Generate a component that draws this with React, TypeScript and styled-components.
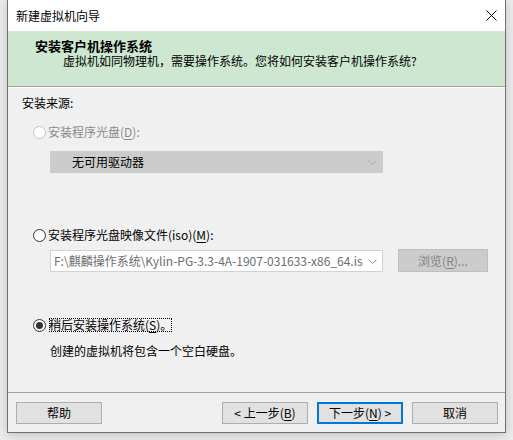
import styled, { createGlobalStyle } from 'styled-components';

const GlobalStyle = createGlobalStyle`
  html, body {
    margin: 0;
    padding: 0;
    background: #ececec;
  }
  body {
    font-family: "Noto Sans CJK SC", "Noto Sans", sans-serif;
    font-size: 12px;
    color: #000;
  }
`;

// --- window frame ---
const Screen = styled.div`
  width: 513px;
  height: 440px;
  overflow: hidden;
  display: flex;
  align-items: flex-start;
  padding-left: 7px;
  box-sizing: border-box;
`;

const Window = styled.div`
  width: 499px;
  height: 433px;
  box-sizing: border-box;
  border: 1px solid #707070;
  border-top: none;
  background: #f0f0f0;
  display: flex;
  flex-direction: column;
  box-shadow: 0 2px 10px rgba(0, 0, 0, 0.18);
`;

const TitleBar = styled.div`
  height: 31px;
  background: #fff;
  display: flex;
  align-items: center;
  justify-content: space-between;
  padding-left: 8px;
  line-height: 16px;
`;

const CloseButton = styled.div`
  width: 46px;
  height: 31px;
  display: flex;
  align-items: center;
  justify-content: center;
  margin-right: -9px;
`;

// --- green header ---
const Header = styled.div`
  height: 56px;
  background: #cde7d1;
  border-bottom: 1px solid #a0a0a0;
  padding: 7px 0 0 27px;
  box-sizing: border-box;
`;

const HeaderTitle = styled.div`
  font-weight: bold;
  font-size: 13px;
  line-height: 16px;
`;

const HeaderSub = styled.div`
  line-height: 14px;
  margin-left: 28px;
`;

// --- body ---
const Body = styled.div`
  flex: 1;
  border-top: 1px solid #fff;
  padding: 7px 0 0 14px;
  display: flex;
  flex-direction: column;
`;

const Label = styled.div<{ $top?: number; $indent?: number }>`
  line-height: 16px;
  margin-top: ${({ $top }) => $top ?? 0}px;
  margin-left: ${({ $indent }) => $indent ?? 0}px;
`;

const RadioRow = styled.div<{ $top: number; $disabled?: boolean }>`
  display: flex;
  align-items: center;
  gap: 2px;
  margin: ${({ $top }) => $top}px 0 0 11px;
  line-height: 16px;
  color: ${({ $disabled }) => ($disabled ? '#8a8a8a' : '#000')};
`;

const RadioCircle = styled.span<{ $disabled?: boolean; $checked?: boolean }>`
  width: 13px;
  height: 13px;
  box-sizing: border-box;
  border-radius: 50%;
  border: 1px solid ${({ $disabled }) => ($disabled ? '#c4c4c4' : '#333')};
  background: #fff;
  display: flex;
  align-items: center;
  justify-content: center;
  &::after {
    content: '';
    display: ${({ $checked }) => ($checked ? 'block' : 'none')};
    width: 7px;
    height: 7px;
    border-radius: 50%;
    background: #333;
  }
`;

const FocusText = styled.span`
  outline: 1px dotted #000;
  outline-offset: -2px;
  padding: 0 1px;
`;

const Key = styled.span`
  text-decoration: underline;
  text-underline-offset: 2px;
`;

const Field = styled.div<{ $disabled?: boolean }>`
  position: relative;
  width: 333px;
  height: 22px;
  box-sizing: border-box;
  border: 1px solid ${({ $disabled }) => ($disabled ? '#cccccc' : '#d2d2d2')};
  background: ${({ $disabled }) => ($disabled ? '#cccccc' : '#fff')};
  display: flex;
  align-items: center;
  line-height: 16px;
  overflow: hidden;
`;

const FieldText = styled.span<{ $muted?: boolean; $pad: number }>`
  box-sizing: border-box;
  padding-left: ${({ $pad }) => $pad}px;
  color: ${({ $muted }) => ($muted ? '#6d6d6d' : '#000')};
  white-space: nowrap;
  width: 312px;
  overflow: hidden;
  flex: none;
`;

const Chevron = styled.svg`
  position: absolute;
  right: 5px;
  top: 8px;
`;

const PathRow = styled.div<{ $top: number }>`
  display: flex;
  align-items: center;
  gap: 15px;
  margin: ${({ $top }) => $top}px 0 0 28px;
`;

const BrowseButton = styled.div`
  width: 90px;
  height: 23px;
  box-sizing: border-box;
  border: 1px solid #bfbfbf;
  background: #cccccc;
  color: #838383;
  display: flex;
  align-items: center;
  justify-content: center;
  line-height: 16px;
  margin-top: -1px;
`;

// --- footer ---
const Footer = styled.div`
  height: 40px;
  border-top: 1px solid #a0a0a0;
  display: flex;
  align-items: center;
  padding: 0 7px 0 8px;
  box-sizing: border-box;
`;

const NavGroup = styled.div`
  margin-left: auto;
  display: flex;
  gap: 9px;
`;

const Button = styled.div<{ $default?: boolean }>`
  width: 86px;
  height: 22px;
  box-sizing: border-box;
  border: ${({ $default }) => ($default ? '2px solid #0078d7' : '1px solid #adadad')};
  background: #e1e1e1;
  display: flex;
  align-items: center;
  justify-content: center;
  line-height: 16px;
`;

function DownChevron({ color }: { color: string }) {
  return (
    <Chevron width="9" height="5" viewBox="0 0 9 5">
      <path d="M0.5 0.5 L4.5 4.5 L8.5 0.5" fill="none" stroke={color} strokeWidth="1" />
    </Chevron>
  );
}

export default function App() {
  return (
    <Screen>
      <GlobalStyle />
      <Window>
        <TitleBar>
          <span>新建虚拟机向导</span>
          <CloseButton>
            <svg width="11" height="11" viewBox="0 0 11 11">
              <path d="M0.5 0.5 L10.5 10.5 M10.5 0.5 L0.5 10.5" stroke="#000" strokeWidth="1" />
            </svg>
          </CloseButton>
        </TitleBar>

        <Header>
          <HeaderTitle>安装客户机操作系统</HeaderTitle>
          <HeaderSub>虚拟机如同物理机，需要操作系统。您将如何安装客户机操作系统?</HeaderSub>
        </Header>

        <Body>
          <Label>安装来源:</Label>

          <RadioRow $top={13} $disabled>
            <RadioCircle $disabled />
            <span>
              安装程序光盘(<Key>D</Key>):
            </span>
          </RadioRow>
          <PathRow $top={11}>
            <Field $disabled>
              <FieldText $pad={21}>无可用驱动器</FieldText>
              <DownChevron color="#a6a6a6" />
            </Field>
          </PathRow>

          <RadioRow $top={54}>
            <RadioCircle />
            <span>
              安装程序光盘映像文件(iso)(<Key>M</Key>):
            </span>
          </RadioRow>
          <PathRow $top={7}>
            <Field>
              <FieldText $muted $pad={3}>
                F:\麒麟操作系统\Kylin-PG-3.3-4A-1907-031633-x86_64.iso
              </FieldText>
              <DownChevron color="#9a9a9a" />
            </Field>
            <BrowseButton>
              浏览(<Key>R</Key>)...
            </BrowseButton>
          </PathRow>

          <RadioRow $top={45}>
            <RadioCircle $checked />
            <FocusText>
              稍后安装操作系统(<Key>S</Key>)。
            </FocusText>
          </RadioRow>
          <Label $top={10} $indent={28}>
            创建的虚拟机将包含一个空白硬盘。
          </Label>
        </Body>

        <Footer>
          <Button>帮助</Button>
          <NavGroup>
            <Button>
              &lt; 上一步(<Key>B</Key>)
            </Button>
            <Button $default>
              下一步(<Key>N</Key>) &gt;
            </Button>
            <Button>取消</Button>
          </NavGroup>
        </Footer>
      </Window>
    </Screen>
  );
}
